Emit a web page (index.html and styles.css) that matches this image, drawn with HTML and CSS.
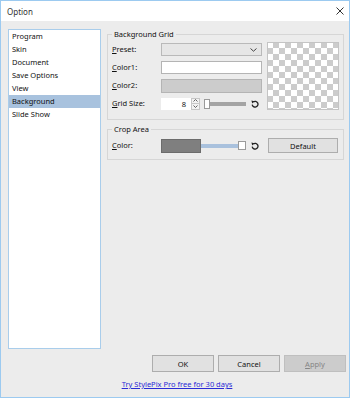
FILE: index.html
```html
<!DOCTYPE html>
<html>
<head>
<meta charset="utf-8">
<link rel="stylesheet" href="styles.css">
</head>
<body>
<div class="window">
  <div class="titlebar">
    <span class="title">Option</span>
    <svg class="close" width="8" height="8" viewBox="0 0 8 8"><path d="M0.5 0.5 L7.5 7.5 M7.5 0.5 L0.5 7.5" stroke="#333" stroke-width="1" fill="none"/></svg>
  </div>
  <div class="content">
    <div class="main">
      <ul class="list">
        <li>Program</li>
        <li>Skin</li>
        <li>Document</li>
        <li>Save Options</li>
        <li>View</li>
        <li class="sel">Background</li>
        <li>Slide Show</li>
      </ul>
      <div class="panel">
        <fieldset class="group g1">
          <legend>Background Grid</legend>
          <div class="g1-inner">
            <div class="form">
              <span class="lbl"><u>P</u>reset:</span>
              <div class="combo"><svg width="7" height="4" viewBox="0 0 7 4"><path d="M0.5 0.5 L3.5 3.2 L6.5 0.5" stroke="#444" stroke-width="1" fill="none"/></svg></div>
              <span class="lbl"><u>C</u>olor1:</span>
              <div class="colorbox white"></div>
              <span class="lbl"><u>C</u>olor2:</span>
              <div class="colorbox gray"></div>
              <span class="lbl"><u>G</u>rid Size:</span>
              <div class="ctl-row">
                <div class="spin">8</div>
                <div class="spin-btns">
                  <div class="sb"><svg width="5" height="3" viewBox="0 0 5 3"><path d="M0.5 2.5 L2.5 0.5 L4.5 2.5" stroke="#555" stroke-width="0.9" fill="none"/></svg></div>
                  <div class="sb"><svg width="5" height="3" viewBox="0 0 5 3"><path d="M0.5 0.5 L2.5 2.5 L4.5 0.5" stroke="#555" stroke-width="0.9" fill="none"/></svg></div>
                </div>
                <div class="slider s1">
                  <div class="thumb"></div>
                  <div class="track dark"></div>
                </div>
                <svg class="reset" width="8" height="8" viewBox="0 0 8 8"><path d="M2.3 1.9 A2.9 2.9 0 1 1 1.2 4.6" fill="none" stroke="#222" stroke-width="1.3"/><path d="M0.4 0.6 L3.4 1.2 L1.3 3.4 Z" fill="#222"/></svg>
              </div>
            </div>
            <div class="preview"></div>
          </div>
        </fieldset>
        <fieldset class="group g2">
          <legend>Crop Area</legend>
          <div class="row2">
            <span class="lbl"><u>C</u>olor:</span>
            <div class="ctl-row">
              <div class="cropcolor"></div>
              <div class="slider s2">
                <div class="track blue"></div>
                <div class="thumb"></div>
              </div>
              <svg class="reset" width="8" height="8" viewBox="0 0 8 8"><path d="M2.3 1.9 A2.9 2.9 0 1 1 1.2 4.6" fill="none" stroke="#222" stroke-width="1.3"/><path d="M0.4 0.6 L3.4 1.2 L1.3 3.4 Z" fill="#222"/></svg>
              <div class="btn default">Default</div>
            </div>
          </div>
        </fieldset>
      </div>
    </div>
    <div class="buttons">
      <div class="btn">OK</div>
      <div class="btn">Cancel</div>
      <div class="btn disabled"><u>A</u>pply</div>
    </div>
    <div class="linkrow"><a class="link">Try StylePix Pro free for 30 days</a></div>
  </div>
</div>
</body>
</html>
```
FILE: styles.css
```css
html, body {
  margin: 0;
  padding: 0;
  width: 350px;
  height: 398px;
  overflow: hidden;
}
body {
  font-family: "Noto Sans", "Liberation Sans", sans-serif;
  font-size: 7.5px;
  color: #111;
  background: #ececec;
}
.window {
  box-sizing: border-box;
  width: 350px;
  height: 398px;
  border: 1px solid #9ccaf0;
  background: #ececec;
  display: flex;
  flex-direction: column;
}
.titlebar {
  height: 20px;
  background: #fff;
  display: flex;
  align-items: center;
  justify-content: space-between;
  padding: 0 5px 0 6px;
  flex: none;
}
.title {
  font-size: 8px;
  color: #333;
}
.content {
  flex: 1;
  display: flex;
  flex-direction: column;
  padding: 8px 3px 0 7px;
}
.main {
  display: flex;
  gap: 6px;
  align-items: flex-start;
  height: 320px;
  flex: none;
}
.list {
  box-sizing: border-box;
  width: 93px;
  height: 320px;
  border: 1px solid #a9cdeb;
  background: #fff;
  margin: 0;
  padding: 0;
  list-style: none;
  flex: none;
}
.list li {
  height: 13px;
  line-height: 13px;
  padding-left: 3px;
}
.list li.sel {
  background: #a8c2de;
}
.panel {
  width: 237px;
  margin-top: -1px;
  flex: none;
}
.group {
  margin: 0;
  padding: 3px 4px 9px 4px;
  border: 1px solid #d6d6d6;
  min-width: 0;
}
.group legend {
  padding: 0 2px;
  margin-left: 0;
  line-height: 12px;
}
.g2 {
  margin-top: 3px;
  padding-bottom: 6px;
}
.g1-inner {
  display: flex;
  gap: 5px;
}
.form {
  display: grid;
  grid-template-columns: 49px 101px;
  grid-auto-rows: 13px;
  row-gap: 5px;
  align-items: center;
}
.lbl {
  line-height: 13px;
}
.combo {
  box-sizing: border-box;
  height: 13px;
  border: 1px solid #b9b9b9;
  background: #e6e6e6;
  display: flex;
  align-items: center;
  justify-content: flex-end;
  padding-right: 4px;
}
.colorbox {
  box-sizing: border-box;
  height: 13px;
  border: 1px solid #b4b4b4;
}
.colorbox.white { background: #fff; }
.colorbox.gray { background: #cccccc; height: 14px; }
.ctl-row {
  display: flex;
  align-items: center;
}
.spin {
  box-sizing: border-box;
  width: 30px;
  height: 12px;
  background: #fff;
  text-align: right;
  line-height: 12px;
  padding-right: 5px;
}
.spin-btns {
  width: 9px;
  height: 12px;
  display: flex;
  flex-direction: column;
  margin-right: 4px;
}
.sb {
  box-sizing: border-box;
  flex: 1;
  border: 1px solid #c6c6c6;
  background: #f2f2f2;
  display: flex;
  align-items: center;
  justify-content: center;
}
.sb + .sb { border-top: none; }
.slider {
  display: flex;
  align-items: center;
}
.thumb {
  box-sizing: border-box;
  background: #fff;
  border: 1px solid #9a9a9a;
  flex: none;
}
.s1 .thumb { width: 6px; height: 10px; }
.s2 .thumb { width: 8px; height: 9px; }
.track {
  height: 4px;
  flex: none;
}
.track.dark { width: 36px; background: #a4a4a4; }
.track.blue { width: 37px; background: #a9c1dd; }
.reset {
  margin-left: 5px;
  flex: none;
}
.preview {
  box-sizing: border-box;
  width: 72px;
  height: 68px;
  margin-top: -1px;
  border: 1px solid #c4c4c4;
  background-color: #fff;
  background-image: conic-gradient(#cccccc 25%, #ffffff 0 50%, #cccccc 0 75%, #ffffff 0);
  background-size: 12px 12px;
  background-position: -1px -1px;
}
.row2 {
  display: grid;
  grid-template-columns: 49px auto;
  align-items: center;
  height: 15px;
}
.cropcolor {
  box-sizing: border-box;
  width: 40px;
  height: 14px;
  background: #7f7f7f;
  border: 1px solid #6c6c6c;
}
.btn {
  box-sizing: border-box;
  width: 62px;
  height: 17px;
  border: 1px solid #adadad;
  background: #e1e1e1;
  display: flex;
  align-items: center;
  justify-content: center;
  color: #111;
}
.btn.default {
  width: 70px;
  height: 15px;
  margin-left: 9px;
}
.btn.disabled {
  background: #cccccc;
  border-color: #bfbfbf;
  color: #858585;
}
.buttons {
  display: flex;
  justify-content: flex-end;
  gap: 4px;
  margin-top: 6px;
  flex: none;
}
.linkrow {
  margin-top: 6px;
  text-align: center;
  line-height: 12px;
}
.link {
  color: #2b2bd6;
  text-decoration: underline;
}
```
